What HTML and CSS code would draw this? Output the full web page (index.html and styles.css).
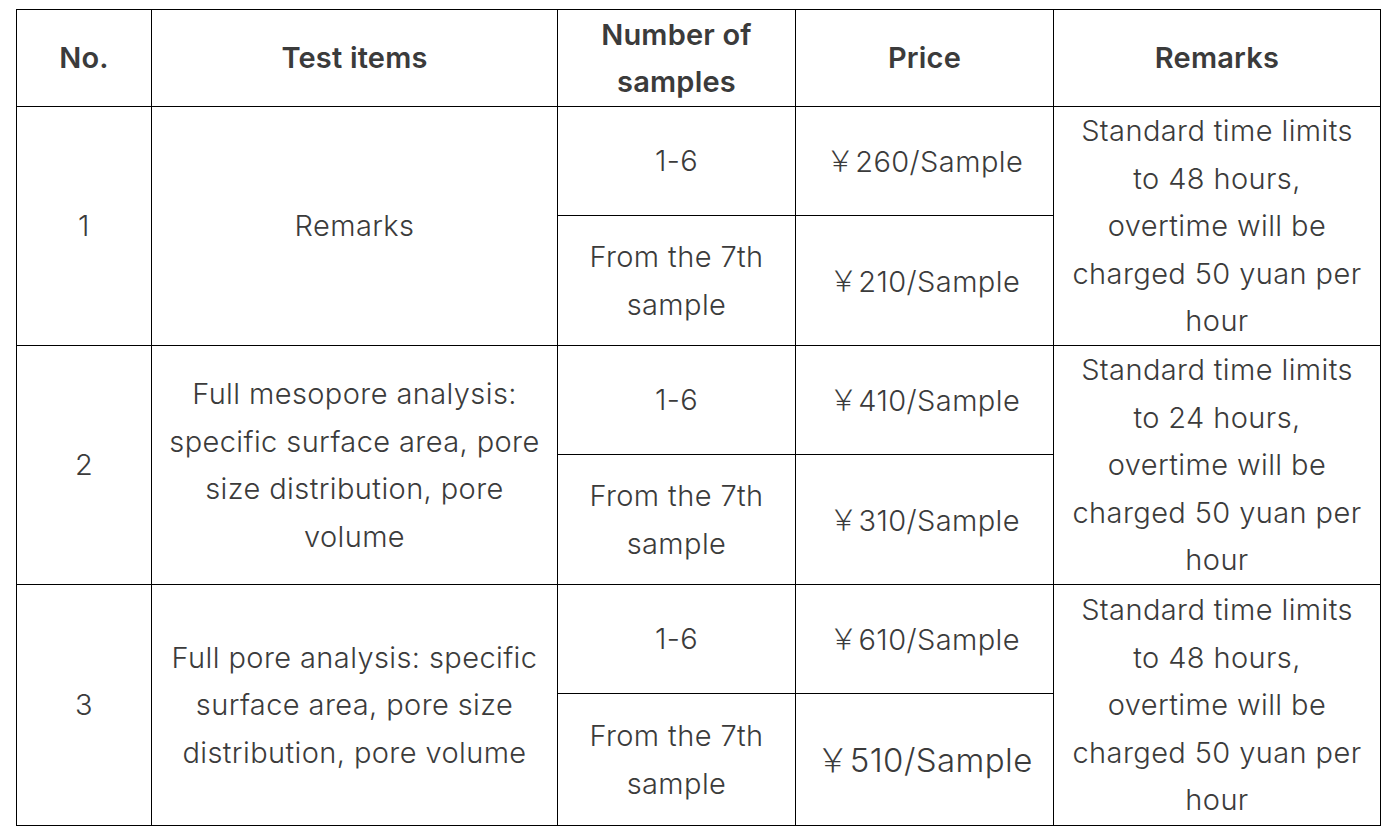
FILE: index.html
```html
<!DOCTYPE html>
<html lang="en">
<head>
<meta charset="utf-8">
<title>Test price list</title>
<link rel="stylesheet" href="styles.css">
</head>
<body>
<table class="price">
  <colgroup>
    <col class="c-no">
    <col class="c-item">
    <col class="c-num">
    <col class="c-price">
    <col class="c-rem">
  </colgroup>
  <thead>
    <tr class="head">
      <th>No.</th>
      <th>Test items</th>
      <th>Number of samples</th>
      <th>Price</th>
      <th>Remarks</th>
    </tr>
  </thead>
  <tbody>
    <tr class="sub-a">
      <td rowspan="2">1</td>
      <td rowspan="2" class="item">Remarks</td>
      <td>1-6</td>
      <td><span class="yen">￥</span>260/Sample</td>
      <td rowspan="2" class="rem">Standard time limits to 48 hours, overtime will be charged 50 yuan per hour</td>
    </tr>
    <tr class="sub-b">
      <td>From the 7th sample</td>
      <td><span class="yen">￥</span>210/Sample</td>
    </tr>
    <tr class="sub-a">
      <td rowspan="2">2</td>
      <td rowspan="2" class="item">Full mesopore analysis: specific surface area, pore size distribution, pore volume</td>
      <td>1-6</td>
      <td><span class="yen">￥</span>410/Sample</td>
      <td rowspan="2" class="rem">Standard time limits to 24 hours, overtime will be charged 50 yuan per hour</td>
    </tr>
    <tr class="sub-b">
      <td>From the 7th sample</td>
      <td><span class="yen">￥</span>310/Sample</td>
    </tr>
    <tr class="sub-a">
      <td rowspan="2">3</td>
      <td rowspan="2" class="item">Full pore analysis: specific surface area, pore size distribution, pore volume</td>
      <td>1-6</td>
      <td><span class="yen">￥</span>610/Sample</td>
      <td rowspan="2" class="rem">Standard time limits to 48 hours, overtime will be charged 50 yuan per hour</td>
    </tr>
    <tr class="sub-b last">
      <td>From the 7th sample</td>
      <td class="big"><span class="yen">￥</span>510/Sample</td>
    </tr>
  </tbody>
</table>
</body>
</html>
```
FILE: styles.css
```css
html, body {
  margin: 0;
  padding: 0;
  background: #ffffff;
}

body {
  font-family: "Inter", "Noto Sans CJK SC", sans-serif;
  color: #3b3b3b;
}

.price {
  margin: 9px 0 0 16px;
  border-collapse: collapse;
  table-layout: fixed;
  width: 1365px;
}

.c-no { width: 135px; }
.c-item { width: 406px; }
.c-num { width: 238px; }
.c-price { width: 258px; }
.c-rem { width: 327px; }

.price th,
.price td {
  border: 1px solid #000;
  padding: 0 15px;
  text-align: center;
  vertical-align: middle;
  font-size: 29px;
  font-weight: 300;
  letter-spacing: 0.4px;
  line-height: 47.5px;
}

.price th {
  font-weight: 600;
  letter-spacing: 0.2px;
}

.head { height: 97px; }
.sub-a { height: 109px; }
.sub-b { height: 130px; }
.last { height: 132px; }

.yen {
  font-family: "Noto Sans CJK SC", sans-serif;
}

.price .big {
  font-size: 33px;
  padding: 0 8px;
}
```
